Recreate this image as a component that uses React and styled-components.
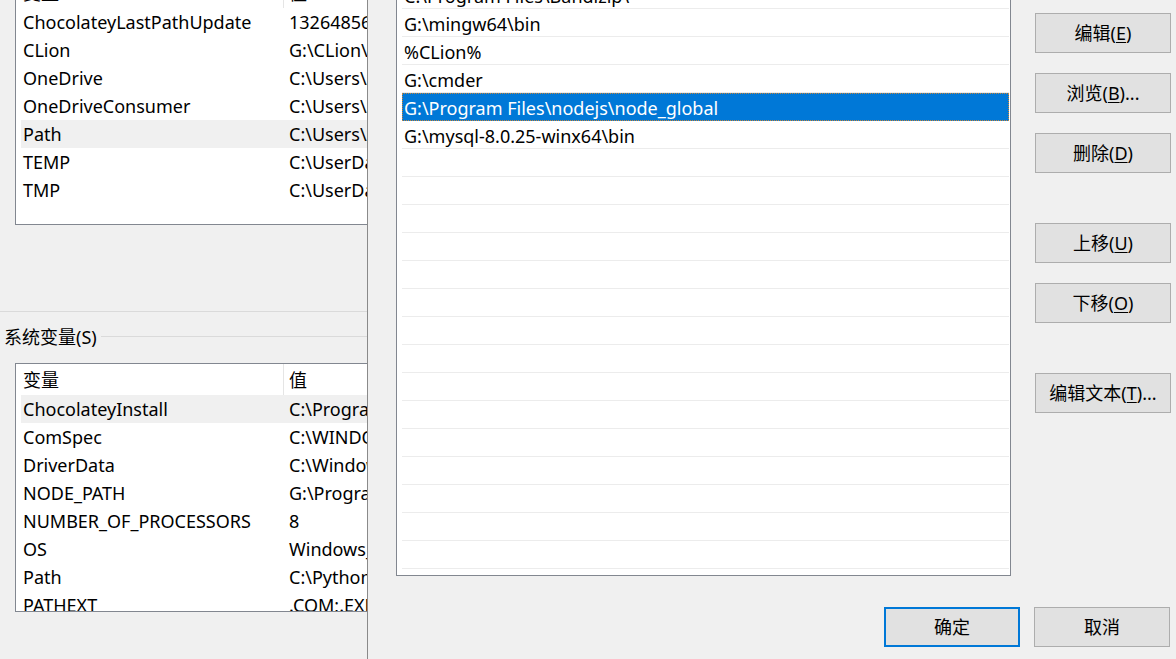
import React from 'react';
import styled, { createGlobalStyle, css } from 'styled-components';

const GlobalStyle = createGlobalStyle`
  html, body {
    margin: 0;
    padding: 0;
    background: #f0f0f0;
  }
  body {
    font-family: "Noto Sans", "Noto Sans CJK SC", sans-serif;
    font-size: 18px;
    line-height: 1.2;
    color: #000;
  }
`;

const Screen = styled.div`
  width: 1176px;
  height: 659px;
  overflow: hidden;
  display: flex;
  background: #f0f0f0;
`;

/* ---------- back dialog (环境变量) ---------- */

const BackDialog = styled.div`
  flex: 0 0 367px;
  overflow: hidden;
  display: flex;
  flex-direction: column;
`;

const ListBox = styled.div`
  box-sizing: border-box;
  width: 520px;
  height: 249px;
  margin-left: 15px;
  border: 1px solid #828790;
  background: #fff;
  overflow: hidden;
  ${(p) => p.$top && css`margin-top: ${p.$top}px;`}
`;

const HeaderRow = styled.div`
  display: flex;
  height: 31px;
  align-items: center;
`;

const HeaderCell = styled.div`
  box-sizing: border-box;
  height: 100%;
  display: flex;
  align-items: center;
  padding-top: 2px;
  white-space: nowrap;
  ${(p) =>
    p.$first
      ? css`
          flex: 0 0 268px;
          padding-left: 7px;
          border-right: 1px solid #e5e5e5;
        `
      : css`
          flex: 1;
          padding-left: 5px;
        `}
`;

const VarRow = styled.div`
  box-sizing: border-box;
  display: flex;
  height: 28px;
  align-items: center;
  padding-top: 2px;
  margin-left: 5px;
  background: ${(p) => (p.$active ? '#f0f0f0' : 'transparent')};
  white-space: nowrap;
`;

const VarName = styled.div`
  flex: 0 0 262px;
  padding-left: 2px;
  box-sizing: border-box;
`;

const VarValue = styled.div`
  flex: 1;
  padding-left: 6px;
`;

const Divider = styled.div`
  height: 1px;
  background: #dadada;
  margin-top: 86px;
`;

const GroupHeader = styled.div`
  display: flex;
  align-items: center;
  height: 22px;
  margin-top: 14px;
  padding-left: 4px;
  white-space: nowrap;
`;

const GroupLabel = styled.span`
  position: relative;
  top: 1px;
`;

const GroupLine = styled.div`
  flex: 1;
  height: 1px;
  margin-left: 4px;
  margin-top: -2px;
  background: #dadada;
`;

/* ---------- front dialog (编辑环境变量) ---------- */

const FrontDialog = styled.div`
  flex: 1;
  border-left: 1px solid #8a8a8a;
  background: #f0f0f0;
  display: flex;
  flex-direction: column;
`;

const Body = styled.div`
  display: flex;
  margin-top: -20px;
`;

const PathList = styled.div`
  box-sizing: border-box;
  width: 615px;
  height: 596px;
  margin-left: 28px;
  border: 1px solid #828790;
  background: #fff;
  overflow: hidden;
`;

const PathRow = styled.div`
  box-sizing: border-box;
  height: 28px;
  margin: 0 1px 0 5px;
  padding-left: 2px;
  padding-top: 4px;
  display: flex;
  align-items: center;
  white-space: nowrap;
  border-bottom: 1px solid #ececec;
  ${(p) =>
    p.$selected &&
    css`
      background: #0078d7;
      color: #fff;
      border-bottom-color: #0078d7;
      outline: 1px dotted #c8863a;
      outline-offset: -1px;
    `}
`;

const ButtonColumn = styled.div`
  display: flex;
  flex-direction: column;
  gap: 20px;
  margin-left: 24px;
  padding-top: 33px;
`;

const Button = styled.div`
  box-sizing: border-box;
  width: 136px;
  height: 40px;
  display: flex;
  align-items: center;
  justify-content: center;
  padding-top: 2px;
  background: #e1e1e1;
  border: 1px solid #adadad;
  white-space: nowrap;
  ${(p) => p.$spaced && css`margin-top: 30px;`}
  ${(p) => p.$default && css`border: 2px solid #0078d7;`}
`;

const Key = styled.span`
  text-decoration: underline;
  text-underline-offset: 2px;
`;

const Footer = styled.div`
  display: flex;
  justify-content: flex-end;
  gap: 14px;
  padding-right: 6px;
  margin-top: 31px;
`;

const userVars = [
  ['ChocolateyLastPathUpdate', '132648561770433980'],
  ['CLion', 'G:\\CLion\\bin;'],
  ['OneDrive', 'C:\\Users\\zhang\\OneDrive'],
  ['OneDriveConsumer', 'C:\\Users\\zhang\\OneDrive'],
  ['Path', 'C:\\Users\\zhang\\AppData\\Local'],
  ['TEMP', 'C:\\UserData\\Temp'],
  ['TMP', 'C:\\UserData\\Temp'],
];

const sysVars = [
  ['ChocolateyInstall', 'C:\\ProgramData\\chocolatey'],
  ['ComSpec', 'C:\\WINDOWS\\system32\\cmd.exe'],
  ['DriverData', 'C:\\Windows\\System32\\Drivers\\DriverData'],
  ['NODE_PATH', 'G:\\Program Files\\nodejs\\node_global'],
  ['NUMBER_OF_PROCESSORS', '8'],
  ['OS', 'Windows_NT'],
  ['Path', 'C:\\Python39\\Scripts\\'],
  ['PATHEXT', '.COM;.EXE;.BAT;.CMD'],
];

const paths = [
  'C:\\Program Files\\Bandizip\\',
  'G:\\mingw64\\bin',
  '%CLion%',
  'G:\\cmder',
  'G:\\Program Files\\nodejs\\node_global',
  'G:\\mysql-8.0.25-winx64\\bin',
  ...Array(17).fill(''),
];

const VarTable = ({ rows, active, top }) => (
  <ListBox $top={top}>
    <HeaderRow>
      <HeaderCell $first>变量</HeaderCell>
      <HeaderCell>值</HeaderCell>
    </HeaderRow>
    {rows.map(([name, value]) => (
      <VarRow key={name} $active={name === active}>
        <VarName>{name}</VarName>
        <VarValue>{value}</VarValue>
      </VarRow>
    ))}
  </ListBox>
);

const App = () => (
  <Screen>
    <GlobalStyle />
    <BackDialog>
      <VarTable rows={userVars} active="Path" top={-24} />
      <Divider />
      <GroupHeader>
        <GroupLabel>系统变量(S)</GroupLabel>
        <GroupLine />
      </GroupHeader>
      <VarTable rows={sysVars} active="ChocolateyInstall" top={15} />
    </BackDialog>
    <FrontDialog>
      <Body>
        <PathList>
          {paths.map((p, i) => (
            <PathRow key={i} $selected={i === 4}>
              {p}
            </PathRow>
          ))}
        </PathList>
        <ButtonColumn>
          <Button>编辑(<Key>E</Key>)</Button>
          <Button>浏览(<Key>B</Key>)...</Button>
          <Button>删除(<Key>D</Key>)</Button>
          <Button $spaced>上移(<Key>U</Key>)</Button>
          <Button>下移(<Key>O</Key>)</Button>
          <Button $spaced>编辑文本(<Key>T</Key>)...</Button>
        </ButtonColumn>
      </Body>
      <Footer>
        <Button $default>确定</Button>
        <Button>取消</Button>
      </Footer>
    </FrontDialog>
  </Screen>
);

export default App;
